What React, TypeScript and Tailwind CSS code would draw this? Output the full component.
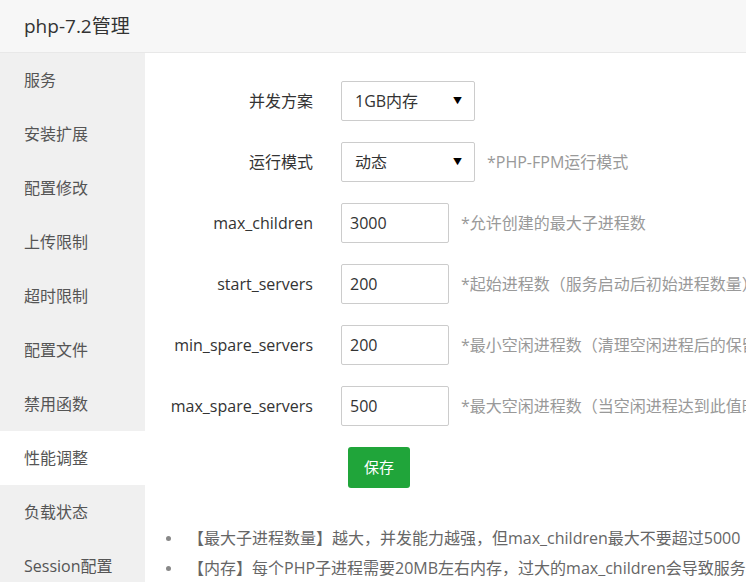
import React from "react";

const menu = [
    "服务",
    "安装扩展",
    "配置修改",
    "上传限制",
    "超时限制",
    "配置文件",
    "禁用函数",
    "性能调整",
    "负载状态",
    "Session配置",
];

const fields = [
    { label: "max_children", value: "3000", hint: "*允许创建的最大子进程数" },
    { label: "start_servers", value: "200", hint: "*起始进程数（服务启动后初始进程数量）" },
    { label: "min_spare_servers", value: "200", hint: "*最小空闲进程数（清理空闲进程后的保留数量）" },
    { label: "max_spare_servers", value: "500", hint: "*最大空闲进程数（当空闲进程达到此值时清理）" },
];

const notes = [
    "【最大子进程数量】越大，并发能力越强，但max_children最大不要超过5000",
    "【内存】每个PHP子进程需要20MB左右内存，过大的max_children会导致服务器不稳定",
];

const Select: React.FC<{ value: string }> = ({ value }) => (
    <div className="w-[134px] h-10 border border-[#ccc] rounded-[2px] bg-white flex items-center justify-between pl-[13px] pr-[12px] text-base text-[#333]">
        <span>{value}</span>
        <span className="text-[9px] text-black">▼</span>
    </div>
);

const App: React.FC = () => {
    const active = "性能调整";

    return (
        <div
            className="w-[746px] h-[582px] overflow-hidden bg-white flex flex-col"
            style={{ fontFamily: '"Open Sans", "Noto Sans CJK SC", sans-serif' }}
        >
            <div className="h-[53px] shrink-0 bg-[#f7f7f7] border-b border-[#e8e8e8] px-6 flex items-center text-[19px] text-[#333]">
                php-7.2管理
            </div>

            <div className="flex flex-1 min-h-0">
                <div className="w-[145px] shrink-0 bg-[#f0f0f0] flex flex-col">
                    {menu.map((item) => (
                        <div
                            key={item}
                            className={`h-[54px] shrink-0 pl-6 flex items-center text-base text-[#555] ${
                                item === active ? "bg-white" : ""
                            }`}
                        >
                            {item}
                        </div>
                    ))}
                </div>

                <div className="flex-1 min-w-0 overflow-hidden pt-7 flex flex-col">
                    <div className="flex flex-col gap-[21px]">
                        <div className="flex items-center">
                            <div className="w-[168px] shrink-0 text-right text-base text-[#333]">并发方案</div>
                            <div className="ml-7 shrink-0">
                                <Select value="1GB内存" />
                            </div>
                        </div>
                        <div className="flex items-center">
                            <div className="w-[168px] shrink-0 text-right text-base text-[#333]">运行模式</div>
                            <div className="ml-7 shrink-0">
                                <Select value="动态" />
                            </div>
                            <span className="ml-3 shrink-0 text-base text-[#999] whitespace-nowrap">*PHP-FPM运行模式</span>
                        </div>
                        {fields.map((f) => (
                            <div key={f.label} className="flex items-center">
                                <div className="w-[168px] shrink-0 text-right text-base text-[#333] whitespace-nowrap">
                                    {f.label}
                                </div>
                                <div className="ml-7 w-[108px] h-10 shrink-0 border border-[#ccc] rounded-[2px] flex items-center px-2 text-base text-[#333]">
                                    {f.value}
                                </div>
                                <span className="ml-3 shrink-0 text-base text-[#999] whitespace-nowrap">{f.hint}</span>
                            </div>
                        ))}
                        <div className="flex">
                            <button className="ml-[203px] w-[62px] h-[41px] rounded-[3px] bg-[#20a53a] text-white text-[15px]">
                                保存
                            </button>
                        </div>
                    </div>

                    <ul className="mt-[35px] flex flex-col">
                        {notes.map((n) => (
                            <li key={n} className="h-[30px] flex items-center whitespace-nowrap text-base text-[#666]">
                                <span className="ml-[21px] w-[5px] h-[5px] rounded-full bg-[#888] shrink-0"></span>
                                <span className="ml-[17px]">{n}</span>
                            </li>
                        ))}
                    </ul>
                </div>
            </div>
        </div>
    );
};

export default App;
